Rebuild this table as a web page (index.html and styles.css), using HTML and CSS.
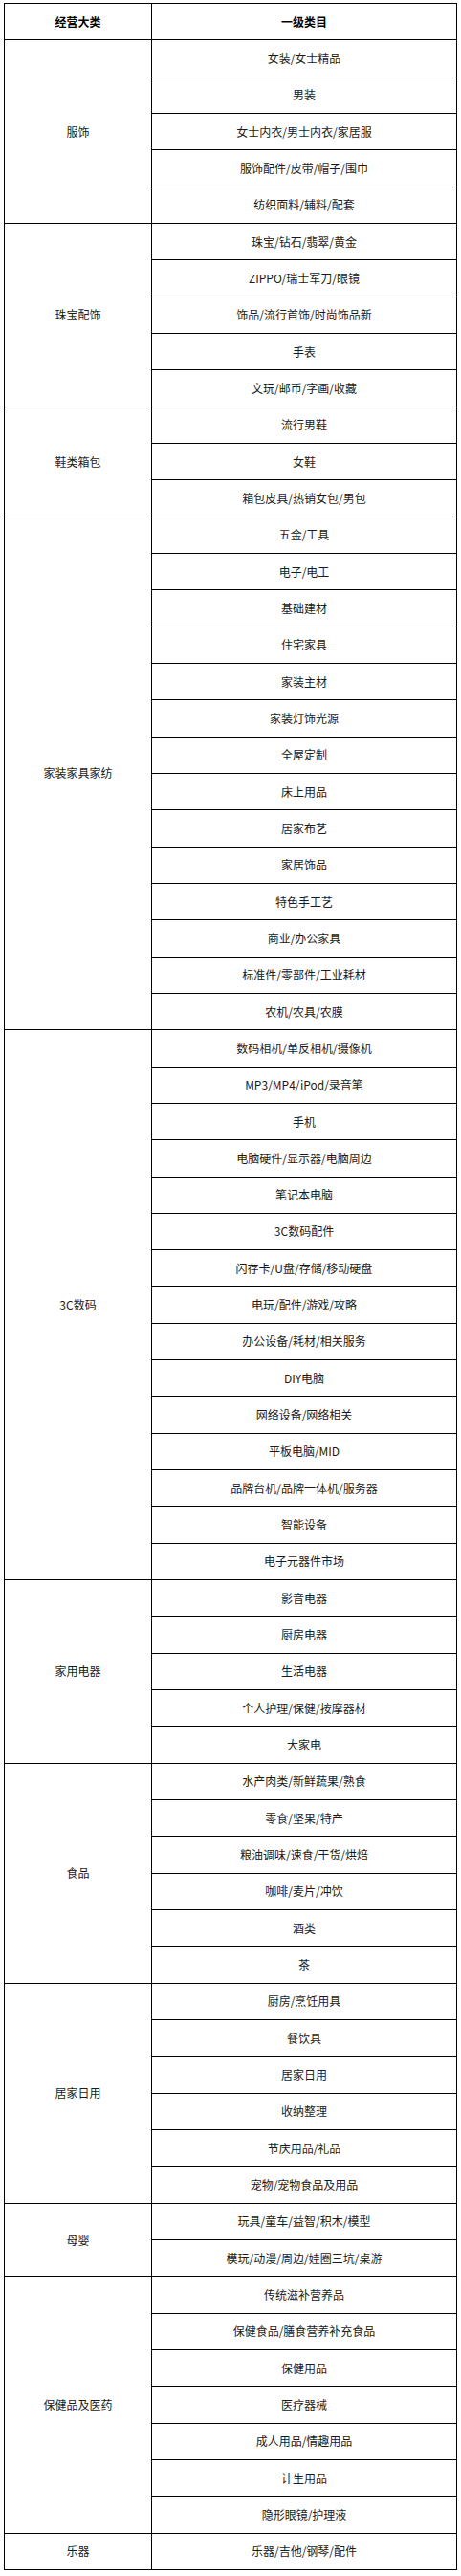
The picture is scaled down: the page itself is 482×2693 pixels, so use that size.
FILE: index.html
```html
<!DOCTYPE html>
<html lang="zh-CN">
<head>
<meta charset="utf-8">
<link rel="stylesheet" href="styles.css">
</head>
<body>
<table class="cat-table">
<colgroup><col class="c1"><col class="c2"></colgroup>
<thead>
<tr><th>经营大类</th><th>一级类目</th></tr>
</thead>
<tbody>
<tr><td rowspan="5">服饰</td><td>女装/女士精品</td></tr>
<tr><td>男装</td></tr>
<tr><td>女士内衣/男士内衣/家居服</td></tr>
<tr><td>服饰配件/皮带/帽子/围巾</td></tr>
<tr><td>纺织面料/辅料/配套</td></tr>
<tr><td rowspan="5">珠宝配饰</td><td>珠宝/钻石/翡翠/黄金</td></tr>
<tr><td>ZIPPO/瑞士军刀/眼镜</td></tr>
<tr><td>饰品/流行首饰/时尚饰品新</td></tr>
<tr><td>手表</td></tr>
<tr><td>文玩/邮币/字画/收藏</td></tr>
<tr><td rowspan="3">鞋类箱包</td><td>流行男鞋</td></tr>
<tr><td>女鞋</td></tr>
<tr><td>箱包皮具/热销女包/男包</td></tr>
<tr><td rowspan="14">家装家具家纺</td><td>五金/工具</td></tr>
<tr><td>电子/电工</td></tr>
<tr><td>基础建材</td></tr>
<tr><td>住宅家具</td></tr>
<tr><td>家装主材</td></tr>
<tr><td>家装灯饰光源</td></tr>
<tr><td>全屋定制</td></tr>
<tr><td>床上用品</td></tr>
<tr><td>居家布艺</td></tr>
<tr><td>家居饰品</td></tr>
<tr><td>特色手工艺</td></tr>
<tr><td>商业/办公家具</td></tr>
<tr><td>标准件/零部件/工业耗材</td></tr>
<tr><td>农机/农具/农膜</td></tr>
<tr><td rowspan="15">3C数码</td><td>数码相机/单反相机/摄像机</td></tr>
<tr><td>MP3/MP4/iPod/录音笔</td></tr>
<tr><td>手机</td></tr>
<tr><td>电脑硬件/显示器/电脑周边</td></tr>
<tr><td>笔记本电脑</td></tr>
<tr><td>3C数码配件</td></tr>
<tr><td>闪存卡/U盘/存储/移动硬盘</td></tr>
<tr><td>电玩/配件/游戏/攻略</td></tr>
<tr><td>办公设备/耗材/相关服务</td></tr>
<tr><td>DIY电脑</td></tr>
<tr><td>网络设备/网络相关</td></tr>
<tr><td>平板电脑/MID</td></tr>
<tr><td>品牌台机/品牌一体机/服务器</td></tr>
<tr><td>智能设备</td></tr>
<tr><td>电子元器件市场</td></tr>
<tr><td rowspan="5">家用电器</td><td>影音电器</td></tr>
<tr><td>厨房电器</td></tr>
<tr><td>生活电器</td></tr>
<tr><td>个人护理/保健/按摩器材</td></tr>
<tr><td>大家电</td></tr>
<tr><td rowspan="6">食品</td><td>水产肉类/新鲜蔬果/熟食</td></tr>
<tr><td>零食/坚果/特产</td></tr>
<tr><td>粮油调味/速食/干货/烘焙</td></tr>
<tr><td>咖啡/麦片/冲饮</td></tr>
<tr><td>酒类</td></tr>
<tr><td>茶</td></tr>
<tr><td rowspan="6">居家日用</td><td>厨房/烹饪用具</td></tr>
<tr><td>餐饮具</td></tr>
<tr><td>居家日用</td></tr>
<tr><td>收纳整理</td></tr>
<tr><td>节庆用品/礼品</td></tr>
<tr><td>宠物/宠物食品及用品</td></tr>
<tr><td rowspan="2">母婴</td><td>玩具/童车/益智/积木/模型</td></tr>
<tr><td>模玩/动漫/周边/娃圈三坑/桌游</td></tr>
<tr><td rowspan="7">保健品及医药</td><td>传统滋补营养品</td></tr>
<tr><td>保健食品/膳食营养补充食品</td></tr>
<tr><td>保健用品</td></tr>
<tr><td>医疗器械</td></tr>
<tr><td>成人用品/情趣用品</td></tr>
<tr><td>计生用品</td></tr>
<tr><td>隐形眼镜/护理液</td></tr>
<tr><td>乐器</td><td>乐器/吉他/钢琴/配件</td></tr>
</tbody>
</table>
</body>
</html>
```

FILE: styles.css
```css
html, body {
  margin: 0;
  padding: 0;
  background: #fff;
}
body {
  padding: 3px 0 0 4px;
  font-family: "Microsoft YaHei", "Noto Sans CJK SC", "Noto Sans", sans-serif;
  font-size: 12px;
  color: #1a1a1a;
}
.cat-table {
  border-collapse: collapse;
  table-layout: fixed;
  width: 473px;
}
.c1 { width: 154px; }
.c2 { width: 319px; }
.cat-table tr {
  height: 38.34px;
}
.cat-table th,
.cat-table td {
  border: 1px solid #000;
  padding: 0;
  text-align: center;
  vertical-align: middle;
  line-height: 16px;
}
.cat-table th {
  font-weight: bold;
  color: #000;
}
```
